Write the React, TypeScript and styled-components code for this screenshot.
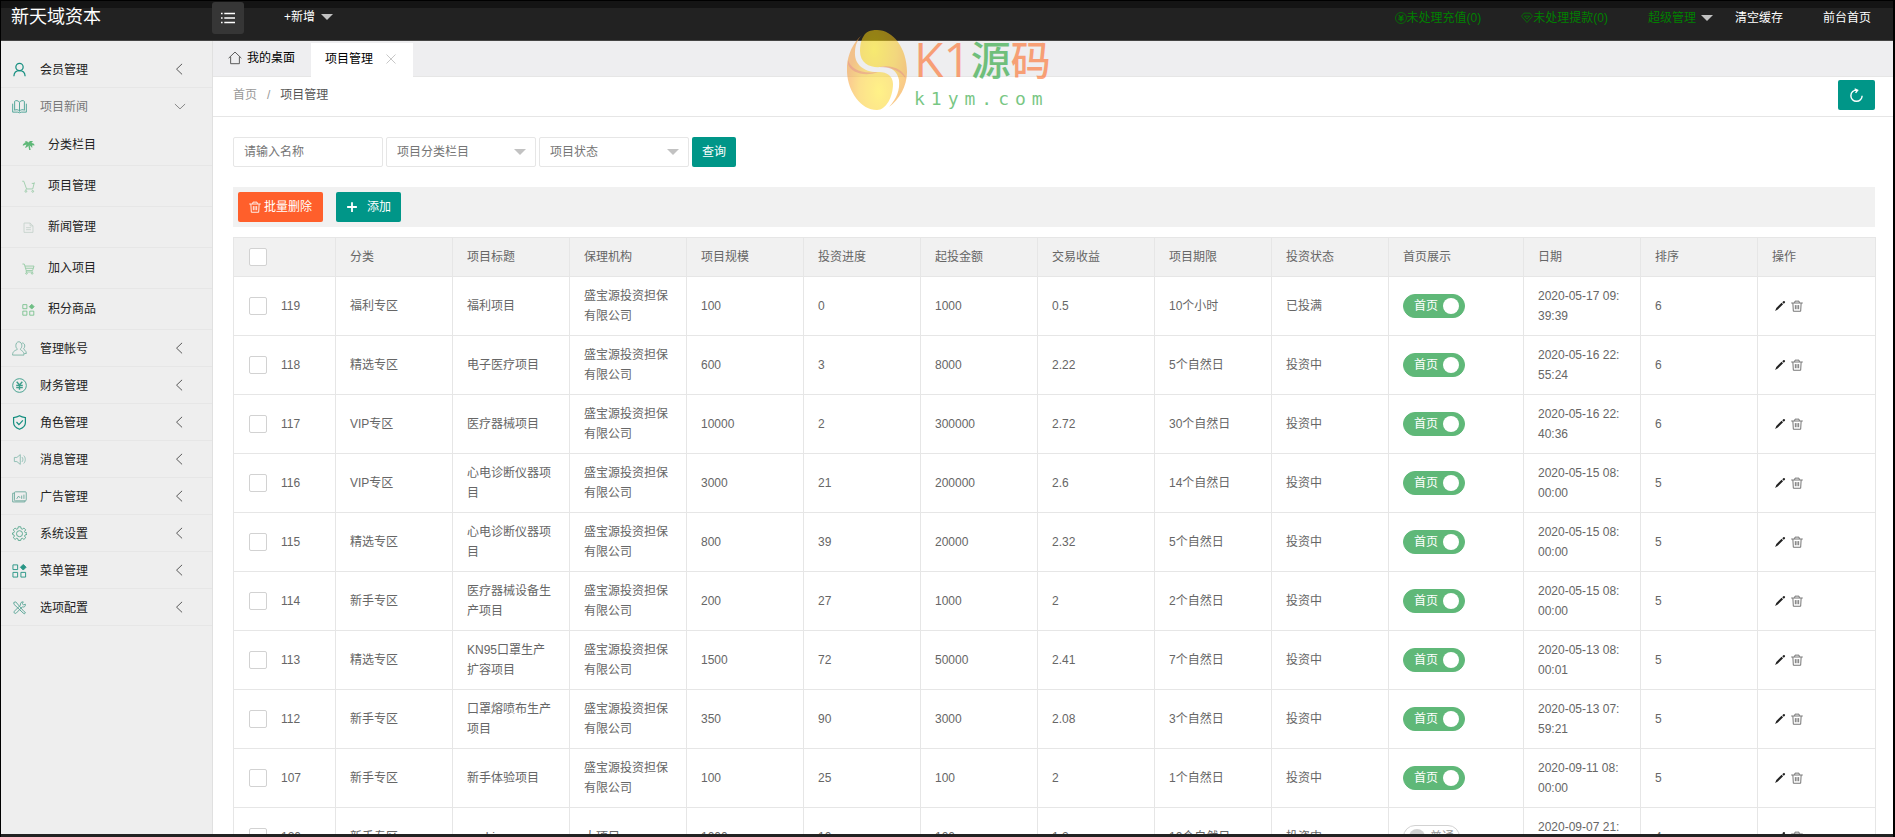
import React, { useState } from "react";
import styled, { createGlobalStyle, css } from "styled-components";

const GlobalStyle = createGlobalStyle`
  * { box-sizing: border-box; }
  body {
    margin: 0;
    background: #000;
    color: #333;
    font: 12px/20px "Liberation Sans", "Noto Sans CJK SC", sans-serif;
  }
  a { color: inherit; text-decoration: none; }
  button, input, select { font: inherit; color: inherit; margin: 0; }
  button { cursor: pointer; }
`;

const TEAL = "#009688";
const GREEN = "#5fb878";
const LINE = "#e6e6e6";

/* ---------- icons ---------- */

type IconName = keyof typeof shapes;

const shapes = {
  user: (
    <>
      <circle cx="8" cy="5.3" r="3.9" strokeWidth="1.300" />
      <path strokeWidth="1.300" d="M2 15.200c.2-3.800 2.300-6 6-6s5.800 2.200 6 6" />
    </>
  ),
  book: (
    <path d="M8 3.500C6.800 1.500 3.800 1.200 2.800 2.500v9.500c1.500-1 4-.8 5.200 1 1.200-1.800 3.700-2 5.200-1V2.500C12.200 1.200 9.200 1.500 8 3.500zm0 0V13M.7 5v9h5.500l1.800.7 1.800-.7h5.500V5" />
  ),
  tree: (
    <path
      fill="currentColor"
      stroke="none"
      d="M7.600 4.500C6.500 2 3.700 2.300 3.200 4.300L5 4.400C2.500 4.900.8 6.500 1 8.200L5.500 6.900 3.700 11C5.800 10.400 7.500 9.500 7.800 8L8.800 13.500H10.700L9.400 7.800 12.600 11 12.600 7.800 15.500 7.900C15 5.700 13.500 4.900 11.500 5L13.500 3C11 2 8.600 2.700 7.600 4.500Z"
    />
  ),
  cart: (
    <>
      <path d="M.3 1.500h1.900l3.400 9.500h7.600L15.200 3M12 4.200h3M5.600 11l-1.400 1.500" />
      <circle cx="4.800" cy="14" r="1.100" />
      <circle cx="13.200" cy="14" r="1.100" />
    </>
  ),
  cartFull: (
    <>
      <path d="M.5 2.500h2.300l2.400 8h7.800L14.800 5H3.700M4.500 7.700h9.300M5.200 10.500v1.800h8.500" />
      <circle cx="5.500" cy="14" r="1" />
      <circle cx="12.500" cy="14" r="1" />
    </>
  ),
  file: <path d="M2.500 2.500H10L13.500 6v8h-11zM10 2.500V6h3.500M5 8.200h6M5 10.700h6" />,
  blocks: (
    <>
      <path d="M1 2h5v5H1zM1 10h5v5H1zM9.500 10h5v5h-5z" />
      <path fill="currentColor" d="M12 1.500l3 3-3 3-3-3z" />
    </>
  ),
  group: (
    <path d="M4.100 5C4.100 2.500 5.500.8 7.300.8s3.200 1.700 3.200 4.200c0 1.700-.7 3-1.700 3.700.2 1.500 4 1.500 4 6.300H.6c0-4.800 3.600-4.800 5.200-6.300C4.800 8 4.100 6.700 4.100 5zM10.800 2c2 .2 2.800 1.600 2.800 3.400 0 1.300-.6 2.300-1.300 2.900.3 1.200 3 1.600 3 5h-2.300" />
  ),
  yen: (
    <>
      <circle cx="8" cy="8" r="7.300" />
      <path strokeWidth="1.500" d="M5 4l3 3.500L11 4M8 7.500v5M4.500 8h7M4.500 10.300h7" />
    </>
  ),
  shield: <path strokeWidth="1.300" d="M8 .9c1.800 1.200 4 1.700 6.300 1.800v5.500c0 3.300-3 5.700-6.300 7-3.300-1.300-6.300-3.700-6.300-7V2.700C4 2.600 6.200 2.100 8 .9zM4.800 7.500l2.600 2.700 4.200-4.400" />,
  speaker: <path d="M2.500 5.800v4.400h2.700l3.600 3V2.800l-3.600 3zM10.700 5.500c1.200 1.300 1.200 3.700 0 5M12.500 3.800c2.200 2.300 2.200 6.100 0 8.400" />,
  picture: (
    <>
      <rect x="2.600" y="3" width="12.600" height="9.600" rx="1" />
      <path d="M2.600 4.500H.7v9.300h13v-1.200M5 10.500l2-3 1.600 2M10.300 10.500V7M12.700 10.500V6" />
    </>
  ),
  gear: (
    <>
      <path d="M6.700.8h2.600l.4 2 1.300.6 1.700-1.200 1.900 1.900-1.200 1.700.6 1.300 2 .3V9l-2 .5-.6 1.200 1.200 1.800-1.900 1.800-1.700-1.200-1.300.6-.4 1.700H6.700l-.4-1.700-1.300-.6-1.700 1.200-1.900-1.800 1.200-1.800L2 9.500 0.600 9V7.400L2 7.100l.6-1.300-1.200-1.700 1.900-1.900L5 3.400l1.300-.6z" />
      <circle cx="8" cy="8.200" r="3.200" />
    </>
  ),
  tools: (
    <path d="M2 2.500l2-.5 8.800 10.300 1.500 1-1 1.500-1.500-1L2 4.500zM14.300 4.500c.3 2.300-1.300 3.600-3.300 2.800L4.500 14c-1.500 1-3-.5-2-2L9 5.500C8.500 3.200 10 1.800 12 2l-1 2 1.300 1.300z" />
  ),
  home: <path strokeWidth="1.100" d="M.7 8.200L8 1.200l7.300 7M3 6.600v7.900h10V6.600" />,
  gem: <path d="M4 1.500h8l3.300 4L8 14 .7 5.500zM4.500 5.500h7L8 9.500z" />,
  close: <path d="M2 2l12 12M14 2L2 14" />,
  left: <path d="M11.500 1L5.200 7l6.300 6" />,
  down: <path d="M1.200 4L8 10.500 14.800 4" />,
  menu: (
    <path strokeWidth="1.500" d="M1 3.500h1.600M4.300 3.500H15M1 8h1.600M4.300 8H15M1 12.500h1.600M4.300 12.500H15" />
  ),
  plus: <path strokeWidth="2.400" d="M8 1.500v13M1.500 8h13" />,
  refresh: <path strokeWidth="1.500" d="M8.500 2.300C4.900 2 2 4.700 2 8.200c0 3.300 2.700 6 6 6s6-2.700 6-6M6 1l3.200 1.400L7 5.200" />,
  trash: (
    <path
      strokeWidth="1.200"
      d="M.3 4h15.400M4.800 3.800L5.300 1.500h5.400l.5 2.300M2.500 4.200l.6 10.800h9.800l.6-10.800M5.800 6.800v5.500M8 6.800v5.500M10.200 6.800v5.500"
    />
  ),
  pencil: (
    <path
      fill="currentColor"
      stroke="none"
      d="M1.500 14.500l1.600-4 7-6.800 2 2-7 6.900zM11 2.900l1.500-1.400c.5-.4 1-.4 1.400 0l.6.6c.4.4.4.9 0 1.400L13 5z"
    />
  ),
};

const Svg = styled.svg<{ $size: number; $tone?: string }>`
  flex: none;
  width: ${(p) => p.$size}px;
  height: ${(p) => p.$size}px;
  color: ${(p) => p.$tone ?? "inherit"};
  fill: none;
  stroke: currentColor;
`;

const Icon = ({ name, size = 14, tone }: { name: IconName; size?: number; tone?: string }) => (
  <Svg viewBox="0 0 16 16" $size={size} $tone={tone} aria-hidden="true">
    {shapes[name]}
  </Svg>
);

const Caret = styled.span`
  border: 6px solid transparent;
  border-top-color: #c2c2c2;
  border-bottom-width: 0;
`;

/* ---------- frame ---------- */

const Page = styled.div`
  position: relative;
  display: flex;
  flex-direction: column;
  height: 100vh;
  overflow: hidden;
  border: solid #000;
  border-width: 1px 2px 0 1px;
`;

const Header = styled.header`
  flex: none;
  display: flex;
  align-items: flex-start;
  height: 40px;
  background: linear-gradient(#141414 7px, #222 7px);
  border-bottom: 1px solid #444;
  color: #fff;
`;

const Brand = styled.a`
  width: 211px;
  padding-left: 10px;
  font-size: 18px;
  line-height: 32px;
`;

const MenuButton = styled.button`
  display: grid;
  place-items: center;
  width: 32px;
  height: 32px;
  padding: 0;
  margin-top: 1px;
  border: 0;
  border-radius: 3px;
  background: #363636;
  color: #fff;
`;

const HeaderLink = styled.a<{ $green?: boolean }>`
  display: flex;
  align-items: center;
  gap: ${(p) => (p.$green ? 0 : 6)}px;
  line-height: 32px;
  color: ${(p) => (p.$green ? "#008000" : "#fff")};
  white-space: nowrap;
`;

const AddLink = styled(HeaderLink)`
  margin-left: 40px;
`;

const UserNav = styled.nav`
  display: flex;
  gap: 40px;
  margin-left: auto;
  padding: 1px 22px 0 0;
`;

const UserMenu = styled(HeaderLink)`
  gap: 5px;
  margin-right: -18px;
`;

const Body = styled.div`
  flex: 1;
  display: flex;
  min-height: 0;
  background: #fff;
`;

const Footer = styled.footer`
  flex: none;
  height: 3px;
  background: #222;
`;

/* ---------- sidebar ---------- */

const Sidebar = styled.nav`
  flex: none;
  width: 212px;
  padding-top: 10px;
  background: #eee;
  border-right: 1px solid #e0e0e0;
`;

const SideItem = styled.a<{ $open?: boolean }>`
  display: flex;
  align-items: center;
  gap: 13px;
  height: 37px;
  padding: 1px 26px 0 11px;
  border-bottom: 1px solid ${(p) => (p.$open ? "transparent" : LINE)};
  color: ${(p) => (p.$open ? "#777" : "#222")};

  span { flex: 1; }
`;

const SideSub = styled.a`
  display: flex;
  align-items: center;
  gap: 13px;
  height: 41px;
  padding-left: 21px;
  border-bottom: 1px solid ${LINE};
  color: #222;
`;

const subItems: [IconName, string, string][] = [
  ["tree", "分类栏目", GREEN],
  ["cart", "项目管理", "#94c9a3"],
  ["file", "新闻管理", "#c3d0c9"],
  ["cartFull", "加入项目", "#8cc79d"],
  ["blocks", "积分商品", "#6fbe85"],
];

const sideItems: [IconName, string, string][] = [
  ["group", "管理帐号", "#7fb5a8"],
  ["yen", "财务管理", "#3d9e8b"],
  ["shield", "角色管理", "#168f80"],
  ["speaker", "消息管理", "#8dbdb2"],
  ["picture", "广告管理", "#70ab9f"],
  ["gear", "系统设置", "#58a78f"],
  ["blocks", "菜单管理", "#279585"],
  ["tools", "选项配置", "#5aa596"],
];

/* ---------- main ---------- */

const Main = styled.main`
  flex: 1;
  min-width: 0;
  display: flex;
  flex-direction: column;
`;

const Tabs = styled.div`
  flex: none;
  display: flex;
  height: 36px;
  padding-top: 2px;
  background: #eeeef0;
  border-bottom: 1px solid ${LINE};
`;

const Tab = styled.button<{ $active?: boolean }>`
  display: flex;
  align-items: center;
  gap: ${(p) => (p.$active ? 12 : 5)}px;
  height: ${(p) => (p.$active ? 34 : 33)}px;
  padding: ${(p) => (p.$active ? "0 16px 3px 14px" : "0 16px 3px 15px")};
  border: 0;
  background: ${(p) => (p.$active ? "#fff" : "transparent")};
  color: #000;
`;

const Crumbs = styled.div`
  flex: none;
  display: flex;
  align-items: center;
  justify-content: space-between;
  height: 40px;
  padding: 0 18px 3px 20px;
  border-bottom: 1px solid ${LINE};
`;

const Trail = styled.nav`
  display: flex;
  gap: 10px;
  color: #999;

  b { font-weight: 400; color: #555; }
`;

const Button = styled.button<{ $danger?: boolean; $pad?: number; $gap?: number }>`
  display: flex;
  align-items: center;
  justify-content: center;
  gap: ${(p) => p.$gap ?? 3}px;
  height: 30px;
  padding: 0 ${(p) => p.$pad ?? 10}px;
  border: 0;
  border-radius: 2px;
  background: ${(p) => (p.$danger ? "#ff5f2b" : TEAL)};
  color: #fff;
`;

const Content = styled.div`
  flex: 1;
  min-height: 0;
  overflow: hidden;
  padding: 20px 18px 0 20px;
`;

const Search = styled.form`
  display: flex;
  gap: 3px;
  margin-bottom: 20px;
`;

const field = css`
  width: 150px;
  height: 30px;
  padding: 0 10px;
  border: 1px solid ${LINE};
  border-radius: 2px;
  background: #fff;
  color: #757575;
  outline: 0;
`;

const TextField = styled.input`
  ${field}
  &::placeholder { color: #757575; }
`;

const SelectBox = styled.label`
  position: relative;

  ${Caret} {
    position: absolute;
    right: 10px;
    top: 12px;
    pointer-events: none;
  }
`;

const Select = styled.select`
  ${field}
  appearance: none;
`;

const Toolbar = styled.div`
  display: flex;
  gap: 13px;
  margin-bottom: 10px;
  padding: 5px;
  background: #f1f1f1;
`;

const Table = styled.table`
  width: 100%;
  table-layout: fixed;
  border-collapse: collapse;
  color: #666;

  th, td {
    padding: 9px 15px 9px 14px;
    border: 1px solid ${LINE};
    text-align: left;
    font-weight: 400;
    word-break: break-all;
  }
  th { background: #f1f1f1; }
`;

const RowHead = styled.label`
  display: flex;
  align-items: center;
  gap: 14px;
  height: 20px;
  padding-left: 1px;
`;

const Check = styled.input`
  appearance: none;
  flex: none;
  width: 18px;
  height: 18px;
  border: 1px solid #d2d2d2;
  border-radius: 2px;
  background: #fff;

  &:checked { background: ${GREEN}; border-color: ${GREEN}; }
`;

const Switch = styled.label<{ $on: boolean }>`
  position: relative;
  display: flex;
  align-items: center;
  justify-content: space-between;
  flex-direction: ${(p) => (p.$on ? "row" : "row-reverse")};
  width: ${(p) => (p.$on ? 62 : 57)}px;
  height: 24px;
  padding: ${(p) => (p.$on ? "0 5px 0 10px" : "0 5px 0 5px")};
  border: 1px solid ${(p) => (p.$on ? GREEN : "#d2d2d2")};
  border-radius: 12px;
  background: ${(p) => (p.$on ? GREEN : "#fff")};
  color: ${(p) => (p.$on ? "#fff" : "#999")};
  cursor: pointer;

  input {
    position: absolute;
    inset: 0;
    opacity: 0;
  }
`;

const Knob = styled.span<{ $on: boolean }>`
  width: 16px;
  height: 16px;
  border-radius: 50%;
  background: ${(p) => (p.$on ? "#fff" : "#d2d2d2")};
`;

const Actions = styled.div`
  display: flex;
  align-items: center;
  gap: 5px;
  padding-left: 2px;
`;

const IconButton = styled.button`
  display: flex;
  padding: 0;
  border: 0;
  background: none;
`;

/* ---------- floating site logo ---------- */

const SiteLogo = styled.div`
  position: absolute;
  left: 846px;
  top: 29px;
  display: flex;
  gap: 7px;
  opacity: 0.53;
  pointer-events: none;
`;

const Egg = styled.svg`
  width: 60px;
  height: 80px;
`;

const LogoText = styled.div`
  display: flex;
  flex-direction: column;
`;

const LogoName = styled.div`
  display: flex;
  align-items: center;
  height: 57px;
  color: #ff5a0a;
  font: 500 40px/57px "Noto Sans CJK SC", sans-serif;

  span { font: 400 48px/57px "Open Sans", sans-serif; }
  em { font-style: normal; color: #009614; }
  strong { font-weight: 500; }
`;

const LogoHost = styled.div`
  color: #009614;
  font: 18px/24px "DejaVu Sans Mono", monospace;
  letter-spacing: 6px;
`;

const Logo = () => (
  <SiteLogo>
    <Egg viewBox="0 0 60 80" aria-hidden="true">
      <defs>
        <radialGradient id="top" cx=".3" cy=".25" r=".8">
          <stop offset="0" stopColor="#ffe600" />
          <stop offset=".6" stopColor="#f7c21a" />
          <stop offset="1" stopColor="#f59a20" />
        </radialGradient>
        <radialGradient id="bottom" cx=".7" cy=".75" r=".7">
          <stop offset="0" stopColor="#ffe61e" />
          <stop offset=".6" stopColor="#fbc828" />
          <stop offset="1" stopColor="#f79a30" />
        </radialGradient>
      </defs>
      <path fill="url(#bottom)" d="M15 5C4 14-1 30 0 42c1 20 14 38 30 38 9 0 16-13 16-26 0-8-6-12-14-12C18 43 7 35 8 22c0-7 3-13 7-17z" />
      <path fill="url(#top)" d="M19 3c4-3 8-3 11-3 16 0 30 18 30 42 0 14-8 28-18 35 8-9 11-17 10-27-2-10-10-14-18-13-10 1-21-3-21-16 0-8 2-14 6-18z" />
      <path fill="#dc3c3c" opacity=".5" d="M1 30c3 9 12 14 30 12-13 5-27 1-30-8z" />
      <path fill="#dc3c3c" opacity=".5" d="M32 37c12-3 25 2 27 12-5-8-15-12-27-12z" />
    </Egg>
    <LogoText>
      <LogoName>
        <span>K1</span>
        <em>源</em>
        <strong>码</strong>
      </LogoName>
      <LogoHost>k1ym.com</LogoHost>
    </LogoText>
  </SiteLogo>
);

/* ---------- data ---------- */

const headings = ["分类", "项目标题", "保理机构", "项目规模", "投资进度", "起投金额", "交易收益", "项目期限", "投资状态", "首页展示", "日期", "排序", "操作"];
const colWidths = [102, 117, 117, 117, 117, 117, 117, 117, 117, 117, 135, 117, 117, 118];
const ORG = "盛宝源投资担保有限公司";

type Row = { id: number; cells: string[]; home: boolean; date: string; order: number };

const rows: Row[] = [
  { id: 119, cells: ["福利专区", "福利项目", ORG, "100", "0", "1000", "0.5", "10个小时", "已投满"], home: true, date: "2020-05-17 09:39:39", order: 6 },
  { id: 118, cells: ["精选专区", "电子医疗项目", ORG, "600", "3", "8000", "2.22", "5个自然日", "投资中"], home: true, date: "2020-05-16 22:55:24", order: 6 },
  { id: 117, cells: ["VIP专区", "医疗器械项目", ORG, "10000", "2", "300000", "2.72", "30个自然日", "投资中"], home: true, date: "2020-05-16 22:40:36", order: 6 },
  { id: 116, cells: ["VIP专区", "心电诊断仪器项目", ORG, "3000", "21", "200000", "2.6", "14个自然日", "投资中"], home: true, date: "2020-05-15 08:00:00", order: 5 },
  { id: 115, cells: ["精选专区", "心电诊断仪器项目", ORG, "800", "39", "20000", "2.32", "5个自然日", "投资中"], home: true, date: "2020-05-15 08:00:00", order: 5 },
  { id: 114, cells: ["新手专区", "医疗器械设备生产项目", ORG, "200", "27", "1000", "2", "2个自然日", "投资中"], home: true, date: "2020-05-15 08:00:00", order: 5 },
  { id: 113, cells: ["精选专区", "KN95口罩生产扩容项目", ORG, "1500", "72", "50000", "2.41", "7个自然日", "投资中"], home: true, date: "2020-05-13 08:00:01", order: 5 },
  { id: 112, cells: ["新手专区", "口罩熔喷布生产项目", ORG, "350", "90", "3000", "2.08", "3个自然日", "投资中"], home: true, date: "2020-05-13 07:59:21", order: 5 },
  { id: 107, cells: ["新手专区", "新手体验项目", ORG, "100", "25", "100", "2", "1个自然日", "投资中"], home: true, date: "2020-09-11 08:00:00", order: 5 },
  { id: 120, cells: ["新手专区", "ceshi", "大项目", "1000", "10", "100", "1.2", "10个自然日", "投资中"], home: false, date: "2020-09-07 21:00:00", order: 4 },
];

const ProjectRow = ({ row }: { row: Row }) => {
  const [on, setOn] = useState(row.home);
  return (
    <tr>
      <td>
        <RowHead>
          <Check type="checkbox" />
          {row.id}
        </RowHead>
      </td>
      {row.cells.map((text, i) => (
        <td key={i}>{text}</td>
      ))}
      <td>
        <Switch $on={on}>
          <input type="checkbox" role="switch" checked={on} onChange={() => setOn(!on)} />
          {on ? "首页" : "普通"}
          <Knob $on={on} />
        </Switch>
      </td>
      <td>{row.date}</td>
      <td>{row.order}</td>
      <td>
        <Actions>
          <IconButton type="button" aria-label="编辑">
            <Icon name="pencil" size={12} tone="#222" />
          </IconButton>
          <IconButton type="button" aria-label="删除">
            <Icon name="trash" size={12} tone="#666" />
          </IconButton>
        </Actions>
      </td>
    </tr>
  );
};

export default function App() {
  return (
    <Page>
      <GlobalStyle />
      <Header>
        <Brand href="#">新天域资本</Brand>
        <MenuButton type="button" aria-label="菜单">
          <Icon name="menu" size={16} />
        </MenuButton>
        <AddLink href="#">
          +新增 <Caret />
        </AddLink>
        <UserNav>
          <HeaderLink href="#" $green>
            <Icon name="yen" size={12} />
            未处理充值(0)
          </HeaderLink>
          <HeaderLink href="#" $green>
            <Icon name="gem" size={12} />
            未处理提款(0)
          </HeaderLink>
          <UserMenu href="#" $green>
            超级管理 <Caret />
          </UserMenu>
          <HeaderLink href="#">清空缓存</HeaderLink>
          <HeaderLink href="#">前台首页</HeaderLink>
        </UserNav>
      </Header>
      <Body>
        <Sidebar>
          <SideItem href="#">
            <Icon name="user" size={15} tone="#168f80" />
            <span>会员管理</span>
            <Icon name="left" size={14} tone="#444" />
          </SideItem>
          <SideItem href="#" $open>
            <Icon name="book" size={15} tone="#4ba294" />
            <span>项目新闻</span>
            <Icon name="down" size={12} tone="#666" />
          </SideItem>
          {subItems.map(([icon, label, tone]) => (
            <SideSub href="#" key={label}>
              <Icon name={icon} size={13} tone={tone} />
              {label}
            </SideSub>
          ))}
          {sideItems.map(([icon, label, tone]) => (
            <SideItem href="#" key={label}>
              <Icon name={icon} size={15} tone={tone} />
              <span>{label}</span>
              <Icon name="left" size={14} tone="#444" />
            </SideItem>
          ))}
        </Sidebar>
        <Main>
          <Tabs>
            <Tab type="button">
              <Icon name="home" size={14} tone="#555" />
              我的桌面
            </Tab>
            <Tab type="button" $active>
              项目管理
              <Icon name="close" size={12} tone="#b4b4b4" />
            </Tab>
          </Tabs>
          <Crumbs>
            <Trail>
              <a href="#">首页</a>
              <span>/</span>
              <b>项目管理</b>
            </Trail>
            <Button type="button" aria-label="刷新" $pad={11}>
              <Icon name="refresh" size={15} />
            </Button>
          </Crumbs>
          <Content>
            <Search onSubmit={(e) => e.preventDefault()}>
              <TextField type="text" placeholder="请输入名称" aria-label="名称" />
              <SelectBox>
                <Select aria-label="项目分类栏目">
                  <option>项目分类栏目</option>
                </Select>
                <Caret />
              </SelectBox>
              <SelectBox>
                <Select aria-label="项目状态">
                  <option>项目状态</option>
                </Select>
                <Caret />
              </SelectBox>
              <Button type="submit">查询</Button>
            </Search>
            <Toolbar>
              <Button type="button" $danger $pad={11}>
                <Icon name="trash" size={12} />
                批量删除
              </Button>
              <Button type="button" $gap={9}>
                <Icon name="plus" size={12} />
                添加
              </Button>
            </Toolbar>
            <Table>
              <colgroup>
                {colWidths.map((w, i) => (
                  <col key={i} width={w} />
                ))}
              </colgroup>
              <thead>
                <tr>
                  <th>
                    <RowHead>
                      <Check type="checkbox" aria-label="全选" />
                    </RowHead>
                  </th>
                  {headings.map((h) => (
                    <th key={h}>{h}</th>
                  ))}
                </tr>
              </thead>
              <tbody>
                {rows.map((row) => (
                  <ProjectRow key={row.id} row={row} />
                ))}
              </tbody>
            </Table>
          </Content>
        </Main>
      </Body>
      <Footer />
      <Logo />
    </Page>
  );
}
